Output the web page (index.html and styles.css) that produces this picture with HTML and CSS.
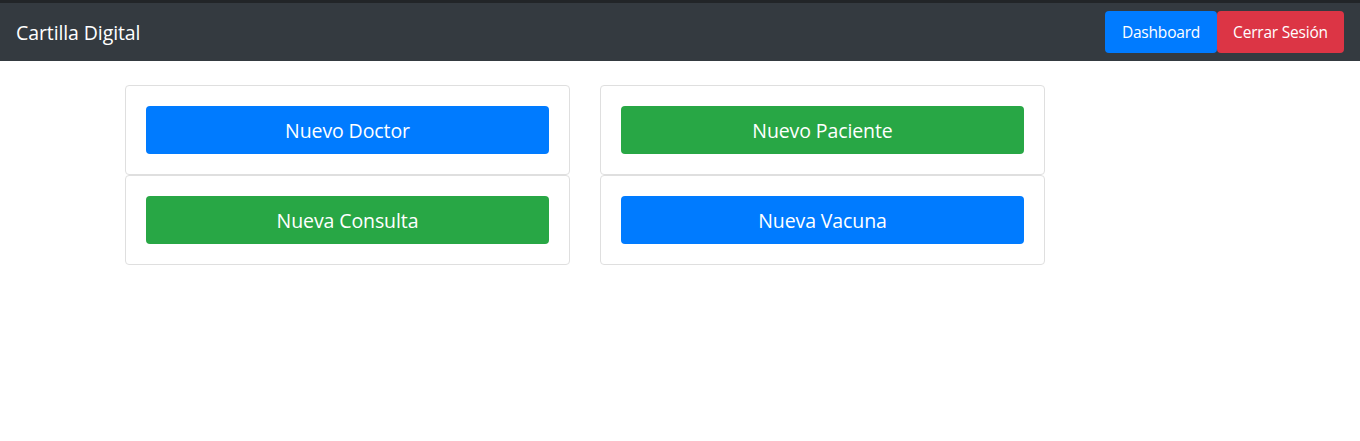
FILE: index.html
```html
<!DOCTYPE html>
<html lang="es">
<head>
<meta charset="utf-8">
<title>Cartilla Digital</title>
<link rel="stylesheet" href="styles.css">
</head>
<body>
<nav class="navbar">
  <a class="brand" href="#">Cartilla Digital</a>
  <div class="nav-actions">
    <a class="btn btn-primary nav-btn" href="#">Dashboard</a>
    <a class="btn btn-danger nav-btn" href="#">Cerrar Sesión</a>
  </div>
</nav>
<main class="container">
  <div class="grid">
    <div class="card"><a class="btn btn-primary btn-lg" href="#">Nuevo Doctor</a></div>
    <div class="card"><a class="btn btn-success btn-lg" href="#">Nuevo Paciente</a></div>
    <div class="card"><a class="btn btn-success btn-lg" href="#">Nueva Consulta</a></div>
    <div class="card"><a class="btn btn-primary btn-lg" href="#">Nueva Vacuna</a></div>
  </div>
</main>
</body>
</html>
```
FILE: styles.css
```css
* { box-sizing: border-box; }
body {
  margin: 0;
  font-family: "Open Sans", "Noto Sans", "Liberation Sans", sans-serif;
  color: #212529;
  background: #fff;
}
.navbar {
  border-top: 3px solid #222528;
  background: #343a40;
  height: 61px;
  display: flex;
  align-items: center;
  justify-content: space-between;
  padding: 0 16px;
}
.brand {
  color: #fff;
  text-decoration: none;
  font-size: 19.5px;
  letter-spacing: -0.1px;
}
.nav-actions {
  display: flex;
}
.btn {
  display: flex;
  align-items: center;
  justify-content: center;
  color: #fff;
  text-decoration: none;
  border-radius: 4px;
}
.nav-btn {
  height: 42px;
  font-size: 15.5px;
  letter-spacing: -0.2px;
}
.nav-actions .btn-primary { width: 112px; }
.nav-actions .btn-danger { width: 127px; }
.btn-primary { background: #007bff; }
.btn-success { background: #28a745; }
.btn-danger { background: #dc3545; }
.container {
  width: 1140px;
  margin: 24px auto 0;
  padding: 0 15px;
}
.grid {
  display: grid;
  grid-template-columns: 445px 445px;
  column-gap: 30px;
}
.card {
  border: 1px solid #dfdfdf;
  border-radius: 4px;
  padding: 20px;
}
.btn-lg {
  height: 48px;
  font-size: 19.5px;
  letter-spacing: -0.1px;
}
```
